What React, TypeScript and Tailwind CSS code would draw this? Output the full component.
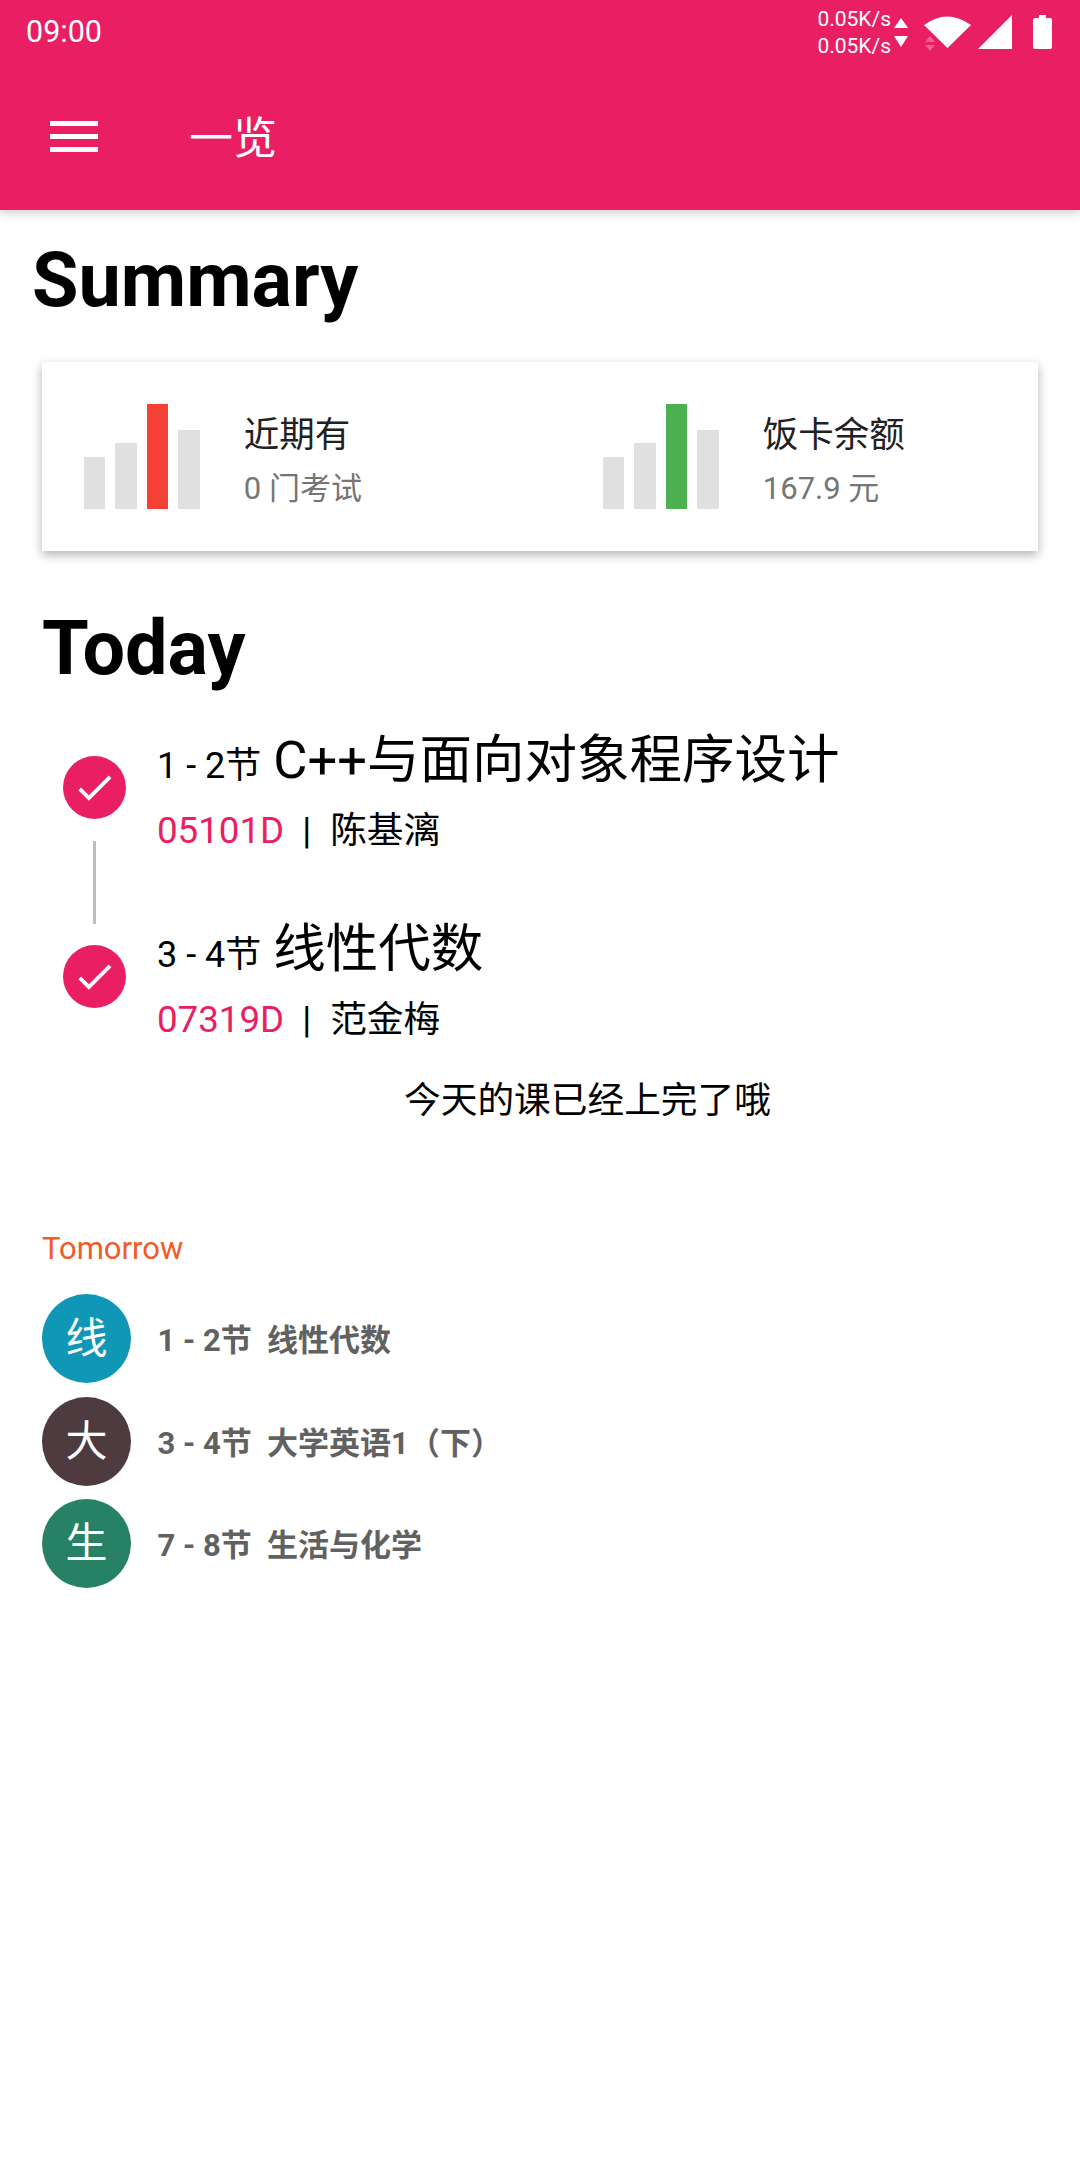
const cjk = "font-['Roboto','Noto_Sans_CJK_SC',sans-serif]";

function Bars({ color }: { color: string }) {
  return (
    <div className="flex items-end gap-[10px] h-[105px] w-[116px]">
      <div className="w-[21.5px] h-[52px] bg-[#e0e0e0]" />
      <div className="w-[21.5px] h-[66px] bg-[#e0e0e0]" />
      <div className={`w-[21.5px] h-[105px] ${color}`} />
      <div className="w-[21.5px] h-[79px] bg-[#e0e0e0]" />
    </div>
  );
}

function Stat({ color, title, sub, className }: { color: string; title: string; sub: string; className: string }) {
  return (
    <div className={`flex items-center ${className}`}>
      <Bars color={color} />
      <div className="ml-[44px] mt-[6px] flex flex-col">
        <div className="text-[35.5px] leading-[44px] text-[#212121]">{title}</div>
        <div className="text-[31px] leading-[36px] mt-[14px] text-[#757575]">{sub}</div>
      </div>
    </div>
  );
}

function Lesson({ time, name, code, teacher, line }: { time: string; name: string; code: string; teacher: string; line?: boolean }) {
  return (
    <div className={`flex ${line ? "h-[189px]" : "h-[144px]"}`}>
      <div className="w-[115px] pl-[21px] pt-[31px] shrink-0">
        <div className="w-[63px] h-[63px] rounded-full bg-[#e91e63] flex items-center justify-center">
          <svg width="45" height="45" viewBox="0 0 24 24" className="fill-white">
            <path d="M9 16.170L4.830 12l-1.420 1.410L9 19 21 7l-1.410-1.410z" />
          </svg>
        </div>
        {line && <div className="ml-[30px] mt-[22px] w-[3px] h-[83px] bg-[#bdbdbd]" />}
      </div>
      <div className="flex flex-col">
        <div className="flex items-baseline text-black h-[70px]">
          <span className="text-[36px] leading-[70px]">{time}</span>
          <span className="text-[52.5px] leading-[70px] ml-[12px]">{name}</span>
        </div>
        <div className="flex items-center h-[72px] text-[36.7px]">
          <span className="text-[#e91e63]">{code}</span>
          <span className="ml-[18px] text-black">|</span>
          <span className="ml-[19px] text-black">{teacher}</span>
        </div>
      </div>
    </div>
  );
}

function Row({ bg, ch, text }: { bg: string; ch: string; text: string }) {
  return (
    <div className="flex items-center h-[89px]">
      <div className={`w-[89px] h-[89px] rounded-full flex items-center justify-center text-white text-[42px] ${bg}`}>{ch}</div>
      <div className="ml-[26.500px] mt-[6px] text-[31px] font-bold text-[#616161] whitespace-pre">{text}</div>
    </div>
  );
}

export default function App() {
  return (
    <div className={`w-[1080px] h-[2160px] bg-white overflow-hidden ${cjk}`}>
      <header className="h-[210px] bg-[#e91e63] text-white shadow-[0_3px_10px_rgba(0,0,0,0.2)] relative">
        <div className="h-[63px] flex items-center justify-between pl-[26px] pr-[28px]">
          <span className="text-[30.500px] font-normal">09:00</span>
          <div className="flex items-center">
            <div className="flex flex-col mt-[2px] text-[21px] leading-[27px] text-right">
              <span>0.05K/s</span>
              <span>0.05K/s</span>
            </div>
            <svg width="14" height="34" viewBox="0 0 14 34" className="ml-[3px] fill-white">
              <path d="M7 3l7 10H0zM0 21h14l-7 11z" />
            </svg>
            <svg width="12" height="16" viewBox="0 0 12 16" className="ml-[16px] mt-[24px] fill-white/30">
              <path d="M6 0l5 6H1zM1 9h10l-5 6z" />
            </svg>
            <svg width="47" height="34" viewBox="0 0 47 34" className="-ml-[12px] fill-white">
              <path d="M0 10Q23-7 47 10L23.500 33z" />
            </svg>
            <svg width="34" height="36" viewBox="0 0 34 36" className="ml-[7px] fill-white">
              <path d="M34 1v34H0z" />
            </svg>
            <svg width="19" height="34" viewBox="0 0 19 34" className="ml-[21px] fill-white">
              <path d="M6 0h7v3h4a2 2 0 012 2v27a2 2 0 01-2 2H2a2 2 0 01-2-2V5a2 2 0 012-2h4z" />
            </svg>
          </div>
        </div>
        <div className="flex items-center h-[147px]">
          <div className="ml-[50px] w-[48px] flex flex-col gap-[8px]">
            <div className="h-[5px] bg-white" />
            <div className="h-[5px] bg-white" />
            <div className="h-[5px] bg-white" />
          </div>
          <span className="ml-[91px] mt-[5px] text-[44px] font-normal">一览</span>
        </div>
      </header>

      <h1 className="ml-[32px] mt-[26px] text-[75.500px] leading-[88px] font-bold text-black">Summary</h1>

      <section className="mx-[42px] mt-[38px] h-[189px] bg-white shadow-[0_4px_10px_rgba(0,0,0,0.3)] flex items-center">
        <Stat color="bg-[#f44336]" title="近期有" sub="0 门考试" className="ml-[41.800px] w-[519px]" />
        <Stat color="bg-[#4caf50]" title="饭卡余额" sub="167.9 元" className="" />
      </section>

      <h2 className="ml-[42px] mt-[53px] text-[75.500px] leading-[88px] font-bold text-black">Today</h2>

      <div className="ml-[42px] mt-[33px]">
        <Lesson time="1 - 2节" name="C++与面向对象程序设计" code="05101D" teacher="陈基漓" line />
        <Lesson time="3 - 4节" name="线性代数" code="07319D" teacher="范金梅" />
      </div>

      <p className="ml-[404px] mt-[18px] text-[36.7px] leading-[50px] text-black">今天的课已经上完了哦</p>

      <div className="ml-[42px] mt-[103px] text-[31px] leading-[40px] text-[#f15a29]">Tomorrow</div>
      <div className="ml-[42px] mt-[25px] flex flex-col gap-[13.5px]">
        <Row bg="bg-[#1197b6]" ch="线" text="1 - 2节  线性代数" />
        <Row bg="bg-[#4e3b40]" ch="大" text="3 - 4节  大学英语1（下）" />
        <Row bg="bg-[#268165]" ch="生" text="7 - 8节  生活与化学" />
      </div>
    </div>
  );
}
